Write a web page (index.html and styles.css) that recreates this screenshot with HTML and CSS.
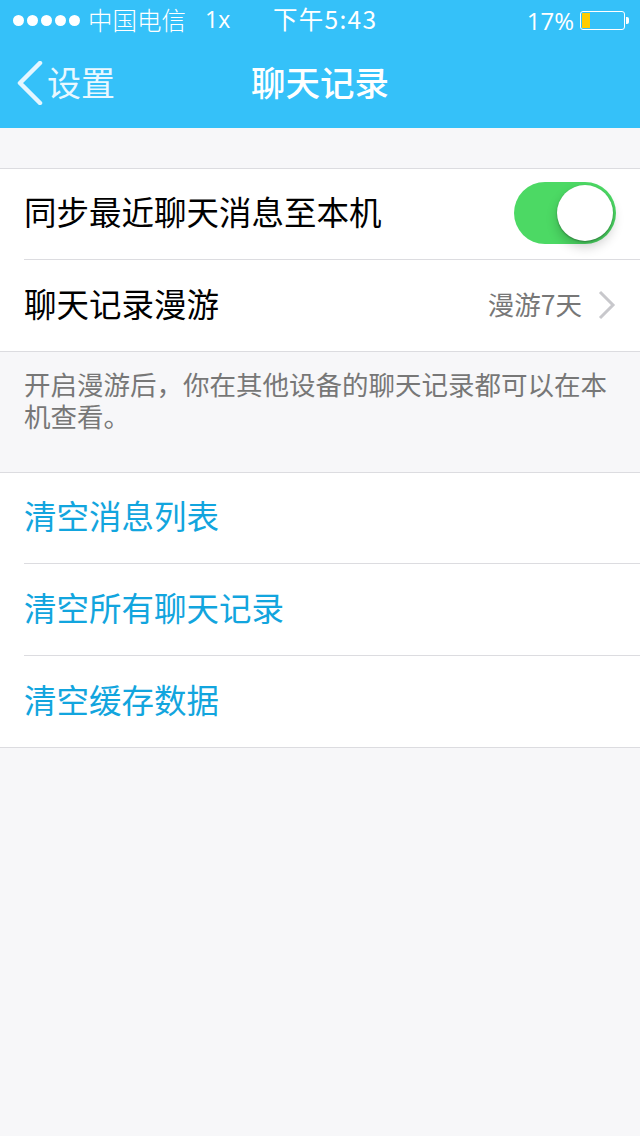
FILE: index.html
```html
<!DOCTYPE html>
<html lang="zh-CN">
<head>
    <meta charset="UTF-8">
    <meta name="viewport" content="width=device-width, initial-scale=1.0">
    <title>聊天记录</title>
    <link rel="stylesheet" href="styles.css">
</head>
<body>
    <div class="top-bar">
        <div class="status-bar">
            <div class="status-left">
                <div class="signal">
                    <span class="dot"></span><span class="dot"></span><span class="dot"></span><span class="dot"></span><span class="dot"></span>
                </div>
                <span class="carrier">中国电信</span>
                <span class="network">1x</span>
            </div>
            <div class="status-time">下午5:43</div>
            <div class="status-right">
                <span class="percent">17%</span>
                <div class="battery"><div class="battery-level"></div></div>
                <div class="battery-tip"></div>
            </div>
        </div>
        <div class="nav-bar">
            <div class="nav-back">
                <svg class="back-icon" width="26" height="44" viewBox="0 0 26 44">
                    <path d="M23 2 L3 22 L23 42" fill="none" stroke="#e4f6ff" stroke-width="4.5" stroke-linecap="round" stroke-linejoin="round"/>
                </svg>
                <span class="back-text">设置</span>
            </div>
            <div class="nav-title">聊天记录</div>
        </div>
    </div>

    <div class="group first-group">
        <div class="row">
            <div class="row-inner">
                <span class="label">同步最近聊天消息至本机</span>
                <div class="switch"><div class="knob"></div></div>
            </div>
        </div>
        <div class="row">
            <div class="row-inner last">
                <span class="label">聊天记录漫游</span>
                <div class="row-value">
                    <span class="value-text">漫游7天</span>
                    <svg class="chevron" width="18" height="30" viewBox="0 0 18 30">
                        <path d="M2 2 L15 15 L2 28" fill="none" stroke="#c8c8cc" stroke-width="3"/>
                    </svg>
                </div>
            </div>
        </div>
    </div>

    <div class="hint">开启漫游后，你在其他设备的聊天记录都可以在本机查看。</div>

    <div class="group">
        <div class="row">
            <div class="row-inner"><span class="label action">清空消息列表</span></div>
        </div>
        <div class="row">
            <div class="row-inner"><span class="label action">清空所有聊天记录</span></div>
        </div>
        <div class="row">
            <div class="row-inner last"><span class="label action">清空缓存数据</span></div>
        </div>
    </div>
</body>
</html>
```

FILE: styles.css
```css
body {
    margin: 0;
    height: 1136px;
    overflow: hidden;
    background-color: #f7f7f9;
    font-family: "Noto Sans CJK SC", "Liberation Sans", sans-serif;
    color: #000;
}

/* Top bar */
.top-bar {
    height: 128px;
    background-color: #35c1f9;
    color: #fff;
}

.status-bar {
    position: relative;
    height: 40px;
    display: flex;
    justify-content: space-between;
    align-items: center;
    font-size: 24.5px;
}

.status-left {
    display: flex;
    align-items: center;
    padding-left: 13px;
}

.signal {
    display: flex;
    gap: 3px;
}

.dot {
    width: 11px;
    height: 11px;
    border-radius: 50%;
    background-color: #fff;
}

.carrier {
    margin-left: 8px;
    padding-bottom: 2px;
    font-weight: 300;
}

.network {
    margin-left: 19px;
    padding-bottom: 2px;
    font-family: "Open Sans", sans-serif;
    font-size: 23px;
}

.status-time {
    position: absolute;
    left: 273px;
    top: -1px;
    line-height: 40px;
    letter-spacing: 1.3px;
}

.status-right {
    display: flex;
    align-items: center;
    padding-right: 11px;
}

.percent {
    margin-right: 6px;
    font-family: "Open Sans", sans-serif;
    font-size: 24px;
}

.battery {
    width: 41px;
    height: 15px;
    padding: 1px;
    border: 1px solid #fff;
    border-radius: 3px;
}

.battery-level {
    width: 8px;
    height: 15px;
    background-color: #fc0;
}

.battery-tip {
    width: 3px;
    height: 7px;
    margin-left: 1px;
    background-color: #fff;
    border-radius: 0 2px 2px 0;
}

.nav-bar {
    position: relative;
    height: 88px;
    display: flex;
    justify-content: center;
    align-items: center;
}

.nav-back {
    position: absolute;
    left: 17px;
    top: -2px;
    height: 88px;
    display: flex;
    align-items: center;
    gap: 4px;
    font-size: 34px;
    color: #e9f8ff;
}

.back-icon {
    margin-top: 2px;
}

.back-text {
    padding-bottom: 2px;
}

.nav-title {
    padding-bottom: 6px;
    font-size: 34.5px;
    font-weight: 500;
}

/* List groups */
.group {
    background-color: #fff;
    border-top: 1px solid #dcdce0;
    border-bottom: 1px solid #dcdce0;
}

.first-group {
    margin-top: 40px;
}

.row {
    padding-left: 24px;
}

.row-inner {
    height: 91px;
    display: flex;
    justify-content: space-between;
    align-items: center;
    padding-right: 24px;
    border-bottom: 1px solid #dcdce0;
}

.row:first-child .row-inner {
    height: 90px;
}

.row-inner.last {
    border-bottom: none;
}

.label {
    padding-bottom: 7px;
    font-size: 32.5px;
}

.action {
    color: #12a5de;
}

.row-value {
    display: flex;
    align-items: center;
    gap: 16px;
    font-size: 26.5px;
    color: #777;
}

.value-text {
    padding-bottom: 4px;
}

.chevron {
    margin-bottom: 2px;
}

/* Switch */
.switch {
    width: 102px;
    height: 62px;
    margin-bottom: 2px;
    border-radius: 31px;
    background-color: #4cd964;
    display: flex;
    justify-content: flex-end;
    align-items: center;
    padding-right: 3px;
    box-sizing: border-box;
}

.knob {
    width: 56px;
    height: 56px;
    border-radius: 50%;
    background-color: #fff;
    box-shadow: 0 6px 12px rgba(0, 0, 0, 0.2), 0 1px 2px rgba(0, 0, 0, 0.3);
}

.hint {
    padding: 16px 24px 40px;
    font-size: 26.5px;
    line-height: 32px;
    color: #777;
}
```
